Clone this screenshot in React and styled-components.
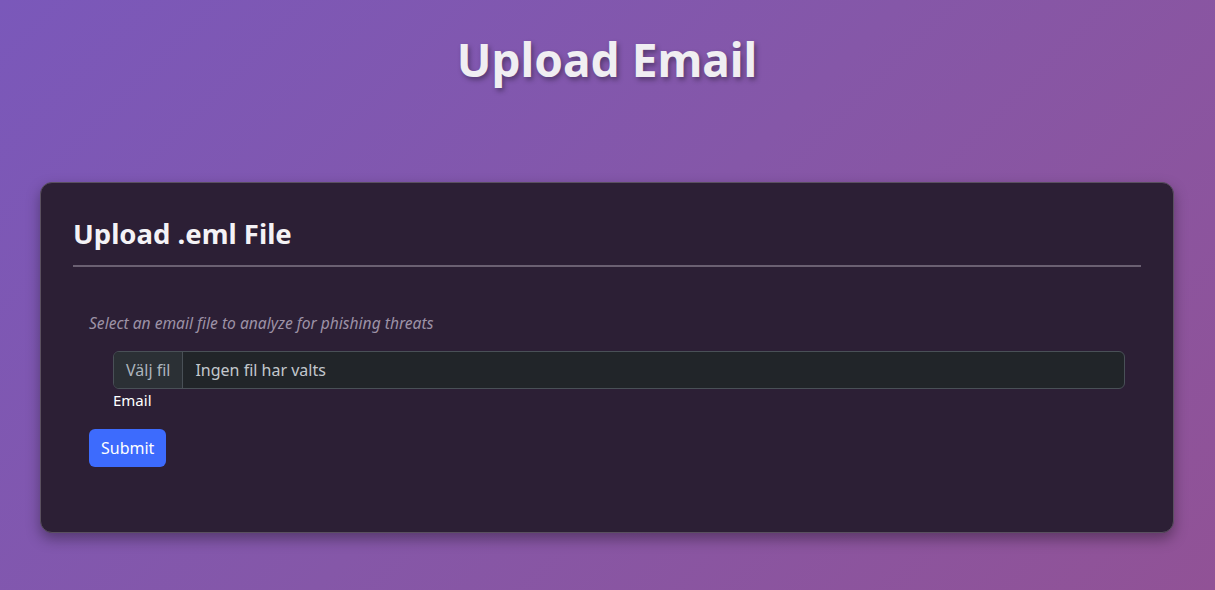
import React from 'react';
import styled, { createGlobalStyle } from 'styled-components';

const GlobalStyle = createGlobalStyle`
    * { box-sizing: border-box; }
    html, body {
        margin: 0;
        padding: 0;
        min-height: 100%;
    }
    body {
        font-family: "Segoe UI", "Noto Sans", "Open Sans", sans-serif;
        background: linear-gradient(135deg, #7a58ba 0%, #8557a8 50%, #915296 100%);
        min-height: 590px;
        color: #fff;
    }
`;

const Page = styled.main`
    display: flex;
    flex-direction: column;
    align-items: center;
    padding: 26px 41px 40px 40px;
`;

const Heading = styled.h1`
    margin: 0;
    font-size: 46px;
    font-weight: 700;
    line-height: 66px;
    color: #f0eef2;
    text-shadow: 2px 3px 5px rgba(0, 0, 0, 0.35);
`;

const Card = styled.section`
    width: 100%;
    margin-top: 90px;
    padding: 30px 32px 65px;
    background: #2c1f35;
    border: 1px solid #5a5060;
    border-radius: 12px;
    box-shadow: 0 6px 14px rgba(0, 0, 0, 0.35);
`;

const CardTitle = styled.h2`
    margin: 0;
    padding-bottom: 10px;
    font-size: 27.5px;
    font-weight: 700;
    line-height: 42px;
    color: #f4f2f6;
    border-bottom: 2px solid #6b6072;
`;

const Body = styled.div`
    display: flex;
    flex-direction: column;
    align-items: flex-start;
    padding: 44px 16px 0;
`;

const Hint = styled.p`
    margin: 0 0 16px;
    font-size: 15.6px;
    font-style: italic;
    line-height: 24px;
    color: #9d92a6;
`;

const Field = styled.div`
    align-self: stretch;
    display: flex;
    flex-direction: column;
    padding: 0 0 0 24px;
`;

const FileBox = styled.label`
    display: flex;
    align-items: stretch;
    height: 38px;
    background: #212529;
    border: 1px solid #495057;
    border-radius: 6px;
    overflow: hidden;
    font-size: 16px;
    cursor: pointer;
`;

const FileButton = styled.span`
    display: flex;
    align-items: center;
    padding: 0 12px;
    background: #2b3035;
    border-right: 1px solid #495057;
    color: #adb5bd;
`;

const FileName = styled.span`
    display: flex;
    align-items: center;
    padding: 0 12px;
    color: #c3c8cd;
`;

const Label = styled.span`
    margin-top: -1px;
    font-size: 15px;
    line-height: 24px;
    color: #ffffff;
`;

const Button = styled.button`
    margin-top: 17px;
    height: 38px;
    padding: 0 12px;
    font-family: inherit;
    font-size: 16px;
    color: #ffffff;
    background: #3d6bfd;
    border: none;
    border-radius: 6px;
    cursor: pointer;
`;

const App = () => {
    return (
        <>
            <GlobalStyle />
            <Page>
                <Heading>Upload Email</Heading>

                <Card>
                    <CardTitle>Upload .eml File</CardTitle>

                    <Body>
                        <Hint>Select an email file to analyze for phishing threats</Hint>

                        <Field>
                            <FileBox>
                                <FileButton>Välj fil</FileButton>
                                <FileName>Ingen fil har valts</FileName>
                            </FileBox>
                            <Label>Email</Label>
                        </Field>

                        <Button type="button">Submit</Button>
                    </Body>
                </Card>
            </Page>
        </>
    );
};

export default App;
